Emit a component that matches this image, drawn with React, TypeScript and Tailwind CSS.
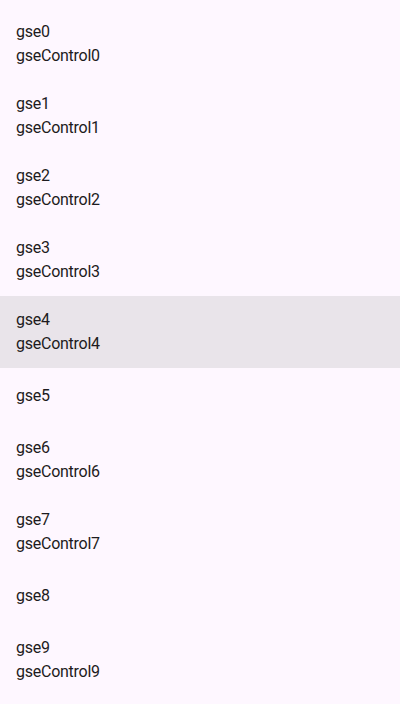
const items: { name: string; control?: string; selected?: boolean }[] = [
  { name: 'gse0', control: 'gseControl0' },
  { name: 'gse1', control: 'gseControl1' },
  { name: 'gse2', control: 'gseControl2' },
  { name: 'gse3', control: 'gseControl3' },
  { name: 'gse4', control: 'gseControl4', selected: true },
  { name: 'gse5' },
  { name: 'gse6', control: 'gseControl6' },
  { name: 'gse7', control: 'gseControl7' },
  { name: 'gse8' },
  { name: 'gse9', control: 'gseControl9' },
];

export default function App() {
  return (
    <div
      className="w-[400px] h-[704px] overflow-hidden bg-[#fef7ff] py-2 text-[#1d1b20] text-base leading-6 tracking-[-0.25px]"
      style={{ fontFamily: 'Roboto, "Noto Sans", sans-serif' }}
    >
      {items.map((item) => (
        <div
          key={item.name}
          className={`flex flex-col justify-center px-4 ${item.control ? 'h-[72px]' : 'h-14'} ${item.selected ? 'bg-[#e9e4ea]' : ''}`}
        >
          <span>{item.name}</span>
          {item.control && <span>{item.control}</span>}
        </div>
      ))}
    </div>
  );
}
